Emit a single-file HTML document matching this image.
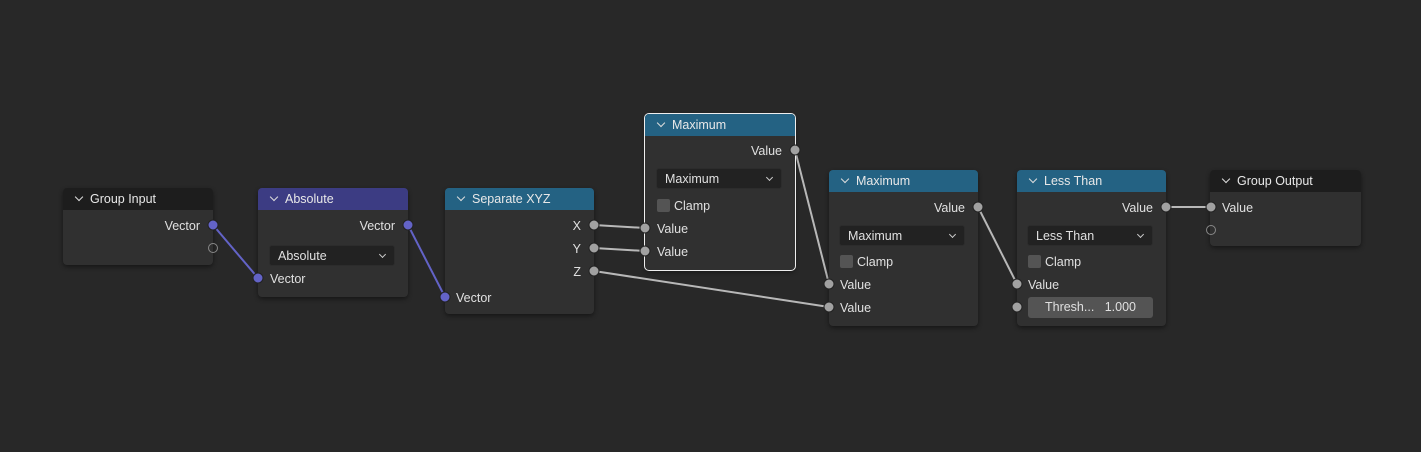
<!DOCTYPE html>
<html><head><style>
body{margin:0;width:1421px;height:452px;background:#282828;position:relative;overflow:hidden;font-family:"Liberation Sans",sans-serif;font-size:12.5px;color:#e0e0e0}
.n{position:absolute;background:#303030;border-radius:4px;box-shadow:0 2px 5px rgba(0,0,0,.45);overflow:hidden}
.n.sel{outline:1.5px solid #eee;outline-offset:0}
.h{height:22px;line-height:22px;padding-left:27px;position:relative;color:#e8e8e8}
.h:before{content:"";position:absolute;left:13px;top:6px;width:5px;height:5px;border-right:1.3px solid #ddd;border-bottom:1.3px solid #ddd;transform:rotate(45deg)}
.t{position:absolute;line-height:14px;margin-top:1px}
.r{text-align:right}
.dd{position:absolute;background:#222;border-radius:3px;height:21px;line-height:21px;padding-left:8px;box-sizing:border-box;border:1px solid #2c2c2c}
.dd:after{content:"";position:absolute;right:9px;top:6px;width:4px;height:4px;border-right:1.2px solid #ccc;border-bottom:1.2px solid #ccc;transform:rotate(45deg)}
.cb{position:absolute;width:13px;height:13px;background:#545454;border-radius:2px}
.s{position:absolute;width:9px;height:9px;border-radius:50%;background:#a1a1a1;border:0.5px solid #222;transform:translate(-50%,-50%)}
.s.p{background:#6363c7}
.s.e{background:transparent;border:1px solid #888;width:8px;height:8px}
</style></head><body>
<svg width="1421" height="452" style="position:absolute;left:0;top:0">
<g stroke-width="2" fill="none">
<path d="M213 225 L258 278" stroke="#6363c7"/>
<path d="M408 225 L445 297" stroke="#6363c7"/>
<g stroke="#b8b8b8">
<path d="M594 225 L645 228"/>
<path d="M594 248 L645 251"/>
<path d="M594 271 L829 307"/>
<path d="M795 150 L829 284"/>
<path d="M978 207 L1017 284"/>
<path d="M1166 207 L1210 207"/>
</g></g></svg>

<div class="n" style="left:63px;top:188px;width:150px;height:77px"><div class="h" style="background:#1d1d1d">Group Input</div>
<div class="t r" style="right:13px;top:30px">Vector</div></div>

<div class="n" style="left:258px;top:188px;width:150px;height:109px"><div class="h" style="background:#3c3c83">Absolute</div>
<div class="t r" style="right:13px;top:30px">Vector</div>
<div class="dd" style="left:11px;top:57px;width:126px">Absolute</div>
<div class="t" style="left:12px;top:83px">Vector</div></div>

<div class="n" style="left:445px;top:188px;width:149px;height:126px"><div class="h" style="background:#246283">Separate XYZ</div>
<div class="t r" style="right:13px;top:30px">X</div>
<div class="t r" style="right:13px;top:53px">Y</div>
<div class="t r" style="right:13px;top:76px">Z</div>
<div class="t" style="left:11px;top:102px">Vector</div></div>

<div class="n sel" style="left:645px;top:114px;width:150px;height:156px"><div class="h" style="background:#246283">Maximum</div>
<div class="t r" style="right:13px;top:29px">Value</div>
<div class="dd" style="left:11px;top:54px;width:126px">Maximum</div>
<div class="cb" style="left:12px;top:85px"></div><div class="t" style="left:29px;top:84px">Clamp</div>
<div class="t" style="left:12px;top:107px">Value</div>
<div class="t" style="left:12px;top:130px">Value</div></div>

<div class="n" style="left:829px;top:170px;width:149px;height:156px"><div class="h" style="background:#246283">Maximum</div>
<div class="t r" style="right:13px;top:30px">Value</div>
<div class="dd" style="left:10px;top:55px;width:126px">Maximum</div>
<div class="cb" style="left:11px;top:85px"></div><div class="t" style="left:28px;top:84px">Clamp</div>
<div class="t" style="left:11px;top:107px">Value</div>
<div class="t" style="left:11px;top:130px">Value</div></div>

<div class="n" style="left:1017px;top:170px;width:149px;height:156px"><div class="h" style="background:#246283">Less Than</div>
<div class="t r" style="right:13px;top:30px">Value</div>
<div class="dd" style="left:10px;top:55px;width:126px">Less Than</div>
<div class="cb" style="left:11px;top:85px"></div><div class="t" style="left:28px;top:84px">Clamp</div>
<div class="t" style="left:11px;top:107px">Value</div>
<div style="position:absolute;left:11px;top:127px;width:125px;height:21px;background:#545454;border-radius:3px;line-height:21px;text-align:center">Thresh...&nbsp;&nbsp;&nbsp;1.000</div></div>

<div class="n" style="left:1210px;top:170px;width:151px;height:76px"><div class="h" style="background:#1d1d1d">Group Output</div>
<div class="t" style="left:12px;top:30px">Value</div></div>

<div class="s p" style="left:213px;top:225px"></div>
<div class="s e" style="left:213px;top:248px"></div>
<div class="s p" style="left:258px;top:278px"></div>
<div class="s p" style="left:408px;top:225px"></div>
<div class="s p" style="left:445px;top:297px"></div>
<div class="s" style="left:594px;top:225px"></div>
<div class="s" style="left:594px;top:248px"></div>
<div class="s" style="left:594px;top:271px"></div>
<div class="s" style="left:645px;top:228px"></div>
<div class="s" style="left:645px;top:251px"></div>
<div class="s" style="left:795px;top:150px"></div>
<div class="s" style="left:829px;top:284px"></div>
<div class="s" style="left:829px;top:307px"></div>
<div class="s" style="left:978px;top:207px"></div>
<div class="s" style="left:1017px;top:284px"></div>
<div class="s" style="left:1017px;top:307px"></div>
<div class="s" style="left:1166px;top:207px"></div>
<div class="s" style="left:1211px;top:207px"></div>
<div class="s e" style="left:1211px;top:230px"></div>
</body></html>
